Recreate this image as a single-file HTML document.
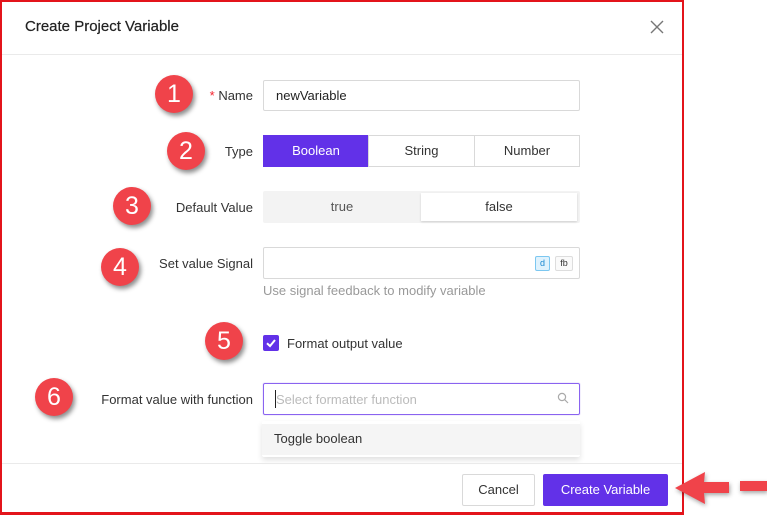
<!DOCTYPE html>
<html><head><style>
*{box-sizing:border-box;margin:0;padding:0}
body{width:767px;height:515px;background:#fff;position:relative;font-family:"Liberation Sans",sans-serif;font-size:13px;color:#333;overflow:hidden}
.a{position:absolute}
.dlg{left:0;top:0;width:684px;height:515px;border:2px solid #e3141b;border-bottom-width:3px}
.lbl{text-align:right;right:514px;color:#333;font-size:13px}
.inp{border:1px solid #d9d9d9;border-radius:2px;background:#fff}
.c{width:38px;height:38px;border-radius:50%;background:#f0434a;color:#fff;font-size:25px;line-height:38px;text-align:center;box-shadow:2px 3px 5px rgba(0,0,0,.45)}
.seg{border:1px solid #d9d9d9;text-align:center;line-height:30px;height:32px}
</style></head><body>
<div class="a dlg"></div>
<div class="a" style="left:25px;top:18px;font-size:15px;color:#222;-webkit-text-stroke:0.2px #222">Create Project Variable</div>
<svg class="a" style="left:650px;top:20px" width="14" height="14"><path d="M1 1L13 13M13 1L1 13" stroke="#777" stroke-width="1.4"/></svg>
<div class="a" style="left:2px;top:54px;width:680px;height:1px;background:#eaeaea"></div>

<div class="a lbl" style="top:88px"><span style="color:#f5222d">*</span> Name</div>
<div class="a inp" style="left:263px;top:80px;width:317px;height:31px;padding:7px 12px;color:#222">newVariable</div>

<div class="a lbl" style="top:144px">Type</div>
<div class="a seg" style="left:263px;top:135px;width:106px;background:#6231e8;border-color:#6231e8;color:#fff">Boolean</div>
<div class="a seg" style="left:368px;top:135px;width:107px;color:#333">String</div>
<div class="a seg" style="left:474px;top:135px;width:106px;color:#333">Number</div>

<div class="a lbl" style="top:200px">Default Value</div>
<div class="a" style="left:263px;top:191px;width:317px;height:32px;background:#f3f3f3;border-radius:2px"></div>
<div class="a" style="left:263px;top:191px;width:158px;height:32px;line-height:32px;text-align:center;color:#555">true</div>
<div class="a" style="left:421px;top:193px;width:156px;height:28px;line-height:28px;text-align:center;background:#fff;box-shadow:0 1px 2px rgba(0,0,0,.15);color:#333">false</div>

<div class="a lbl" style="top:256px">Set value Signal</div>
<div class="a inp" style="left:263px;top:247px;width:317px;height:32px"></div>
<div class="a" style="left:535px;top:256px;width:15px;height:15px;border:1px solid #7cc7f0;background:#dff2fd;color:#1a88d0;font-size:9px;text-align:center;line-height:13px;border-radius:2px">d</div>
<div class="a" style="left:555px;top:256px;width:18px;height:15px;border:1px solid #ddd;background:#fafafa;color:#333;font-size:9px;text-align:center;line-height:13px;border-radius:2px">fb</div>
<div class="a" style="left:263px;top:283px;color:#999">Use signal feedback to modify variable</div>

<div class="a" style="left:263px;top:335px;width:16px;height:16px;background:#6231e8;border-radius:2px"></div>
<svg class="a" style="left:263px;top:335px" width="16" height="16"><path d="M4 8.3L7 11L12 5" stroke="#fff" stroke-width="2" fill="none"/></svg>
<div class="a" style="left:287px;top:336px;color:#333">Format output value</div>

<div class="a lbl" style="top:392px">Format value with function</div>
<div class="a" style="left:263px;top:383px;width:317px;height:32px;border:1px solid #8a63f0;border-radius:2px;box-shadow:0 0 0 1px rgba(98,49,232,.08)"></div>
<div class="a" style="left:275px;top:390px;width:1px;height:18px;background:#222"></div>
<div class="a" style="left:276px;top:392px;color:#bbb">Select formatter function</div>
<svg class="a" style="left:557px;top:392px" width="12" height="12"><circle cx="5" cy="5" r="3.6" stroke="#aaa" fill="none" stroke-width="1.2"/><path d="M7.6 7.6L11 11" stroke="#aaa" stroke-width="1.2"/></svg>
<div class="a" style="left:262px;top:421px;width:318px;height:36px;background:#fff;box-shadow:0 3px 6px rgba(0,0,0,.12);border-radius:2px"></div>
<div class="a" style="left:262px;top:424px;width:318px;height:31px;background:#f5f5f5;padding:7px 12px;color:#333">Toggle boolean</div>

<div class="a" style="left:2px;top:463px;width:680px;height:1px;background:#eaeaea"></div>
<div class="a" style="left:462px;top:474px;width:73px;height:32px;border:1px solid #d9d9d9;border-radius:2px;text-align:center;line-height:30px;color:#333">Cancel</div>
<div class="a" style="left:543px;top:474px;width:125px;height:32px;background:#6231e8;border-radius:2px;text-align:center;line-height:32px;color:#fff">Create Variable</div>

<div class="a c" style="left:155px;top:75px">1</div>
<div class="a c" style="left:167px;top:132px">2</div>
<div class="a c" style="left:113px;top:187px">3</div>
<div class="a c" style="left:101px;top:248px">4</div>
<div class="a c" style="left:205px;top:322px">5</div>
<div class="a c" style="left:35px;top:378px">6</div>

<svg class="a" style="left:670px;top:468px;filter:drop-shadow(1px 2px 2px rgba(0,0,0,.35))" width="97" height="40"><path d="M5 20L35 4L34 14L59 14L59 25L34 25L35 36Z" fill="#f0434a"/><rect x="70" y="13" width="27" height="10" fill="#f0434a"/></svg>
</body></html>
